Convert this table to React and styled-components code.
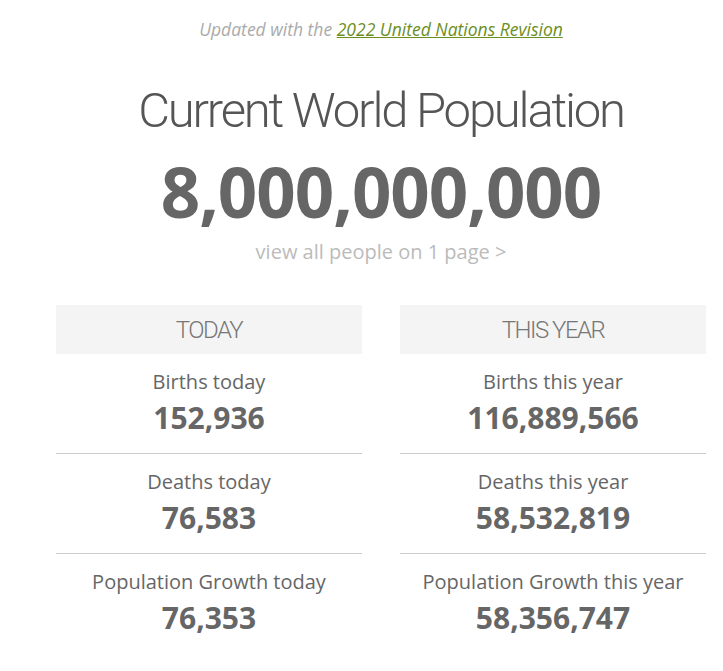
import React from "react";
import styled, { createGlobalStyle } from "styled-components";

const GlobalStyle = createGlobalStyle`
  body {
    margin: 0;
    background: #fff;
    font-family: "Open Sans", "Liberation Sans", sans-serif;
    color: #666;
  }
`;

const today = [
  { label: "Births today", value: "152,936" },
  { label: "Deaths today", value: "76,583" },
  { label: "Population Growth today", value: "76,353" },
];

const thisYear = [
  { label: "Births this year", value: "116,889,566" },
  { label: "Deaths this year", value: "58,532,819" },
  { label: "Population Growth this year", value: "58,356,747" },
];

export default function App() {
  const renderColumn = (title, rows) => (
    <S.Column>
      <S.ColumnHead>{title}</S.ColumnHead>
      {rows.map((row, i) => (
        <S.Row key={i} $last={i === rows.length - 1}>
          <S.Label>{row.label}</S.Label>
          <S.Value>{row.value}</S.Value>
        </S.Row>
      ))}
    </S.Column>
  );

  return (
    <>
      <GlobalStyle />
      <S.Page>
        <S.Updated>
          Updated with the <S.Link href="#">2022 United Nations Revision</S.Link>
        </S.Updated>
        <S.Title>Current World Population</S.Title>
        <S.Counter>8,000,000,000</S.Counter>
        <S.ViewAll href="#">view all people on 1 page &gt;</S.ViewAll>
        <S.Grid>
          {renderColumn("TODAY", today)}
          {renderColumn("THIS YEAR", thisYear)}
        </S.Grid>
      </S.Page>
    </>
  );
}

const S = {
  Page: styled.div`
    width: 650px;
    margin-left: 56px;
    padding-top: 17px;
    display: flex;
    flex-direction: column;
    align-items: center;
    text-align: center;
  `,
  Updated: styled.p`
    margin: 0;
    font-size: 17.5px;
    line-height: 24px;
    font-style: italic;
    color: #aaa;
  `,
  Link: styled.a`
    color: #6b8e23;
    text-decoration: underline;
  `,
  Title: styled.h1`
    margin: 42px 0 0;
    font-family: Roboto, "Liberation Sans", sans-serif;
    font-weight: 300;
    font-size: 49px;
    line-height: 56px;
    color: #555;
    letter-spacing: -2.2px;
  `,
  Counter: styled.div`
    margin-top: 12px;
    font-size: 69px;
    line-height: 80px;
    font-weight: 700;
    letter-spacing: -1px;
    color: #666;
  `,
  ViewAll: styled.a`
    margin-top: 7px;
    font-size: 20px;
    line-height: 28px;
    color: #bbb;
    text-decoration: none;
  `,
  Grid: styled.div`
    width: 100%;
    margin-top: 39px;
    display: grid;
    grid-template-columns: 306px 306px;
    column-gap: 38px;
  `,
  Column: styled.div`
    display: flex;
    flex-direction: column;
  `,
  ColumnHead: styled.div`
    height: 49px;
    background: #f4f4f4;
    display: flex;
    align-items: center;
    justify-content: center;
    font-family: Roboto, "Liberation Sans", sans-serif;
    font-weight: 300;
    font-size: 24px;
    letter-spacing: -1.5px;
    color: #777;
  `,
  Row: styled.div`
    height: 100px;
    box-sizing: border-box;
    padding-top: 15px;
    border-bottom: ${(p) => (p.$last ? "none" : "1px solid #ccc")};
  `,
  Label: styled.div`
    font-size: 20px;
    line-height: 26px;
    color: #666;
  `,
  Value: styled.div`
    margin-top: 3px;
    font-size: 30px;
    line-height: 40px;
    font-weight: 700;
    color: #666;
  `,
};
